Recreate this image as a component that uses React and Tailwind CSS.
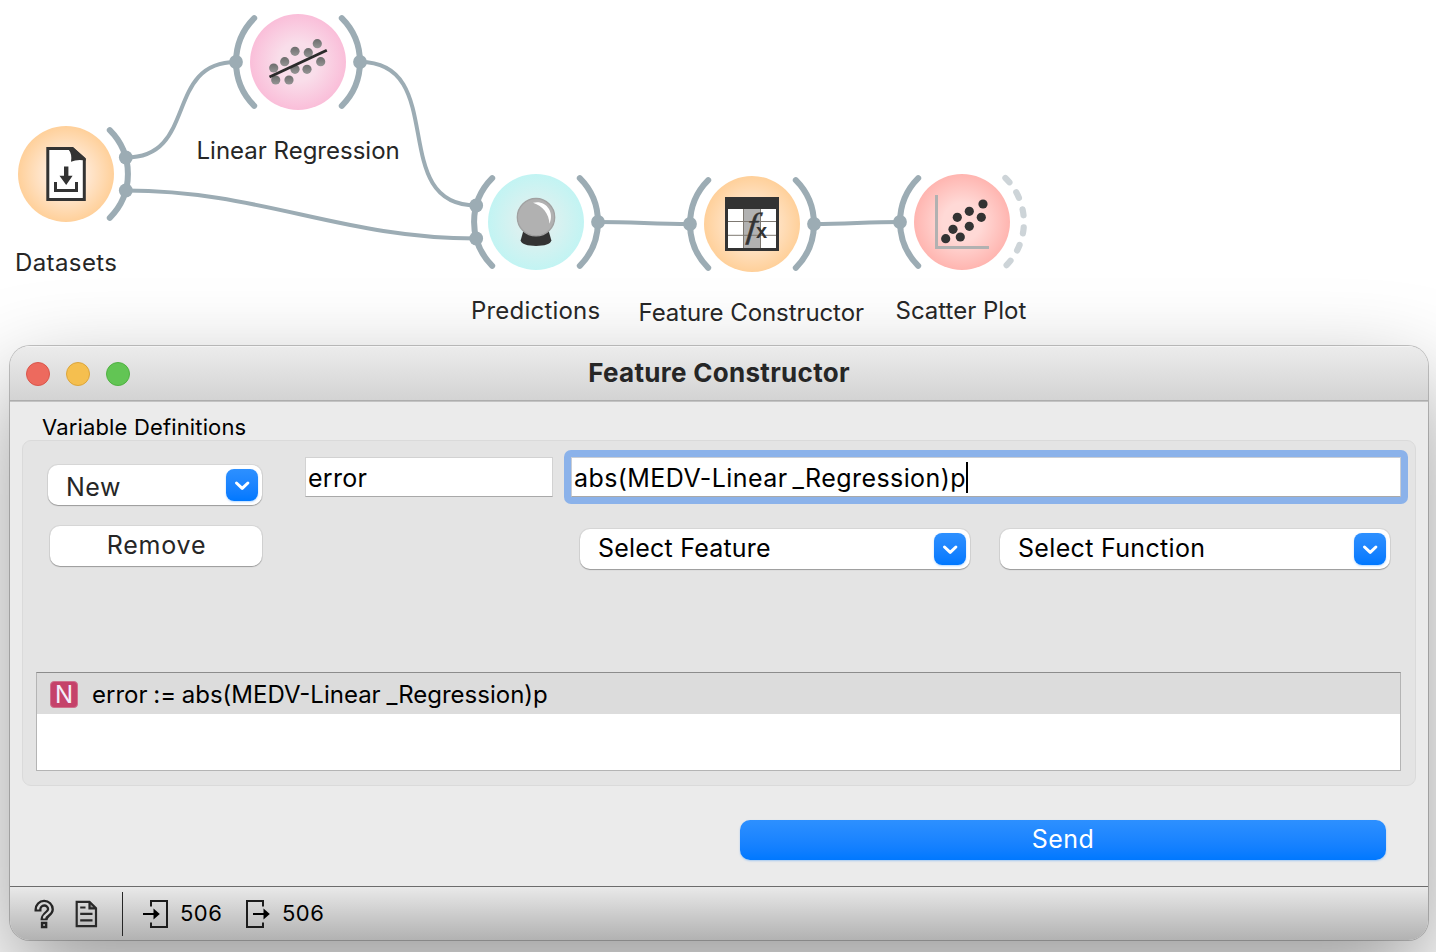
import React from "react";

const ARC = "#9cacb4";

function NodeArc({ cx, cy, side }) {
  const s = side === "right" ? 1 : -1;
  return (
    <path
      d={`M${cx + s * 43.8} ${cy - 43.8}A62 62 0 0 ${s === 1 ? 1 : 0} ${cx + s * 43.8} ${cy + 43.8}`}
      fill="none"
      stroke={ARC}
      strokeWidth="6"
      strokeLinecap="round"
    />
  );
}

function Disc({ id, cx, cy, inner, outer }) {
  return (
    <>
      <radialGradient id={id}>
        <stop offset="0" stopColor={inner} />
        <stop offset="0.4" stopColor={inner} />
        <stop offset="1" stopColor={outer} />
      </radialGradient>
      <circle cx={cx} cy={cy} r="48" fill={`url(#${id})`} />
    </>
  );
}

const links = [
  "M126 157.5C198 157.5 164 62 236 62",
  "M126 190.5C261 190.5 341 238.5 476 238.5",
  "M360 62C450 62 386 205.5 476 205.5",
  "M598 222C635 222 653 224 690 224",
  "M814 224C847 224 867 222 900 222",
];
const anchors = [
  [125.8, 157.5], [125.8, 190.5], [236, 62], [360, 62], [476.2, 205.5],
  [476.2, 238.5], [598, 222], [690, 224], [814, 224], [900, 222],
];
const regressionDots = [
  [273.7, 68], [284.7, 61.7], [295, 51.3], [308.3, 52.7], [317.3, 43.7],
  [320.7, 61.7], [307, 69.3], [295, 69.3], [275.7, 80], [289, 80],
];
const scatterDots = [
  [945.7, 238.7], [960.3, 237], [953, 229.3], [969.3, 226.3],
  [957.3, 217.3], [981.3, 217.3], [969.3, 211.3], [983, 204],
];

function Workflow() {
  return (
    <svg className="block h-[346px] w-[1436px] font-['Inter',sans-serif]" viewBox="0 0 1436 346">
      <defs>
        <linearGradient id="dot" x1="0" y1="0" x2="0" y2="1">
          <stop offset="0" stopColor="#6c6c6c" />
          <stop offset="1" stopColor="#959595" />
        </linearGradient>
      </defs>
      {links.map((d) => (
        <path key={d} d={d} fill="none" stroke={ARC} strokeWidth="4" />
      ))}
      <NodeArc cx={66} cy={174} side="right" />
      <NodeArc cx={298} cy={62} side="left" />
      <NodeArc cx={298} cy={62} side="right" />
      <NodeArc cx={536} cy={222} side="left" />
      <NodeArc cx={536} cy={222} side="right" />
      <NodeArc cx={752} cy={224} side="left" />
      <NodeArc cx={752} cy={224} side="right" />
      <NodeArc cx={962} cy={222} side="left" />
      <path
        d="M1005.4 178A62 62 0 0 1 1005.4 266.4"
        fill="none"
        stroke="#cdd4d8"
        strokeWidth="6.2"
        strokeLinecap="round"
        strokeDasharray="6 12.1"
      />
      {anchors.map(([x, y]) => (
        <circle key={`${x}-${y}`} cx={x} cy={y} r="6.9" fill={ARC} />
      ))}

      <Disc id="orange" cx={66} cy={174} inner="#ffe9d5" outer="#ffd09a" />
      <path d="M47.8 148.5H72l12.3 11V199.5H47.8z" fill="#fff" stroke="#333" strokeWidth="3" />
      <path d="M68.5 149.5Q72.3 154 71 161.7Q77 159 85.7 160.5V158.2L73 147H68.5z" fill="#333" />
      <path d="M64 166.5h4.4v9.2h4.2L66.2 185 59.500 175.700H64z" fill="#333" />
      <path d="M55.500 182v8.500h21V182" fill="none" stroke="#333" strokeWidth="3" />

      <Disc id="pink" cx={298} cy={62} inner="#f9deea" outer="#fabed9" />
      {regressionDots.map(([x, y]) => (
        <circle key={`${x}-${y}`} cx={x} cy={y} r="4.6" fill="url(#dot)" />
      ))}
      <path d="M269.500 77L326.800 50.300" stroke="#2b2b2b" strokeWidth="2.900" />

      <Disc id="cyan" cx={536} cy={222} inner="#dbf1f0" outer="#c2f4f3" />
      <path d="M523.300 231L520.700 240.300C520.700 244 528 246 536 246S551.300 244 551.300 240.300L548.700 231z" fill="#333" />
      <circle cx="536" cy="217.200" r="18.700" fill="#b1b1b1" stroke="#a1a1a1" strokeWidth="1.300" />
      <path d="M533 202.700C545 199.500 555 211 549.500 223.700C549 214 543 206 533 202.700z" fill="#fff" />

      <Disc id="amber" cx={752} cy={224} inner="#ffe6cd" outer="#ffd09a" />
      <path d="M725 197h54v54h-54z" fill="#333" />
      <path d="M728 209h48v39h-48z" fill="#fff" />
      <path d="M743.500 209h17v39h-17z" fill="#b1b1b1" />
      <path d="M728 221.500h48M728 235.300h48M743.500 209v39M760.500 209v39" stroke="#7d7871" strokeWidth="1" />
      <text x="746" y="237.300" fill="#333" stroke="#333" strokeWidth="0.500" fontSize="35" fontStyle="italic" fontFamily="Liberation Serif, serif" transform="translate(746 237.300) skewX(-7) translate(-746 -237.300)">f</text>
      <text x="756" y="238" fill="#333" fontSize="20" fontWeight="700" fontFamily="Liberation Sans, sans-serif">x</text>

      <Disc id="red" cx={962} cy={222} inner="#ffd9d6" outer="#ffb5b0" />
      <path d="M936.500 195v52.500H989" fill="none" stroke="#b1b1b1" strokeWidth="3" />
      {scatterDots.map(([x, y]) => (
        <circle key={`${x}-${y}`} cx={x} cy={y} r="4.600" fill="#333" />
      ))}

      <g fill="#262626" fontSize="24">
        <text x="15" y="271" className="tracking-[0.4px]">Datasets</text>
        <text x="196.500" y="159">Linear Regression</text>
        <text x="471" y="319" className="tracking-[0.2px]">Predictions</text>
        <text x="638.500" y="321" className="tracking-[-0.08px]">Feature Constructor</text>
        <text x="895.500" y="319">Scatter Plot</text>
      </g>
    </svg>
  );
}

function Chevron() {
  return (
    <span className="flex size-8 shrink-0 items-center justify-center rounded-[8px] bg-linear-to-b from-[#2d90ff] to-[#0078ff] shadow-[0_1px_2px_rgba(0,122,255,0.3)]">
      <svg className="size-8" viewBox="0 0 32 32" fill="none" stroke="#fff" strokeWidth="3" strokeLinecap="round" strokeLinejoin="round">
        <path d="M10.500 14L16.200 19.400L21.900 14" />
      </svg>
    </span>
  );
}

const control =
  "h-10 rounded-[10px] bg-white shadow-[0_0_0_1px_rgba(0,0,0,0.06),0_1px_1px_rgba(0,0,0,0.28)]";

function SelectBox({ label, className }) {
  return (
    <div className={`${control} flex w-[390px] items-start justify-between pt-1 pr-1 pl-[18px]`}>
      <span className={`-mt-1 leading-[38px] ${className}`}>{label}</span>
      <Chevron />
    </div>
  );
}

function TitleBar() {
  return (
    <div className="grid h-[56px] grid-cols-[1fr_auto_1fr] border-b border-[#c3c3c3] bg-linear-to-b from-[#ececec] to-[#d3d3d3] shadow-[inset_0_-1px_0_#adadad,inset_0_1px_0_#f4f4f4]">
      <div className="flex items-center gap-4 pl-4">
        <span className="size-6 rounded-full border border-[#d9564b] bg-[#ed6a5e]" />
        <span className="size-6 rounded-full border border-[#dba53c] bg-[#f5bf4f]" />
        <span className="size-6 rounded-full border border-[#50b142] bg-[#62c554]" />
      </div>
      <h1 className="text-[26px] leading-[53px] font-bold tracking-[0.3px] text-[#262626]">Feature Constructor</h1>
    </div>
  );
}

function Definitions() {
  return (
    <section className="flex h-[346px] flex-col rounded-[9px] border border-[#dadada] bg-[#e4e4e4] text-[25px] text-black">
      <div className="flex items-start pl-[25px]">
        <div className="flex w-[214px] flex-col gap-[21px] pt-6 text-[#262626]">
          <div className={`${control} flex items-start justify-between pt-1 pr-1 pl-[18px]`}>
            <span className="-mt-1 leading-[44px] tracking-[0.5px]">New</span>
            <Chevron />
          </div>
          <button className={`${control} ml-[2px] text-center leading-[38px] tracking-[0.8px]`}>
            <span className="block h-10 pl-px">Remove</span>
          </button>
        </div>
        <div className="mt-4 ml-[43px] h-10 w-[248px] border border-[#d2d2d2] border-b-[#a9a9a9] bg-white pl-[2px] leading-[40px] tracking-[0.28px]">
          error
        </div>
        <div className="ml-[11px] w-[844px] pt-[9px]">
          <div className="h-[54px] rounded-[7px] bg-[#8bb2ea] p-[7px]">
            <div className="flex h-10 items-start border border-[#c9cdd4] border-b-[#a9a9a9] bg-white pl-[2px]">
              <span className="leading-[40px] tracking-[0.42px] [word-spacing:-2.5px] whitespace-nowrap">abs(MEDV-Linear _Regression)p</span>
              <span className="mt-1 h-[31px] w-[2px] bg-black" />
            </div>
          </div>
          <div className="flex gap-[30px] pt-[25px] pl-4">
            <SelectBox label="Select Feature" className="tracking-[0.21px]" />
            <SelectBox label="Select Function" className="tracking-[0.32px]" />
          </div>
        </div>
      </div>
      <div className="mt-auto mb-[14px] ml-[13px] h-[99px] w-[1365px] border border-[#b4b4b4] border-t-[#8c8c8c] bg-white">
        <div className="flex h-[41px] items-start bg-[#dcdcdc] pl-[13px]">
          <span className="mt-[8px] h-[27px] w-[28px] rounded-[4px] border border-[#d0708c] bg-[#c5426a] text-center text-[24px] leading-[25px] font-normal text-[#f4eefb]">N</span>
          <span className="ml-[14px] text-[24px] leading-[44px] [word-spacing:-1px]">error := abs(MEDV-Linear _Regression)p</span>
        </div>
      </div>
    </section>
  );
}

function StatusBar() {
  return (
    <footer className="flex h-[54px] items-start border-t border-[#6c6c6c] bg-linear-to-b from-[#e9e9e9] to-[#b2b2b2] pl-[23px] text-[22px] leading-[53px] tracking-[0.5px] text-black">
      <svg className="mt-[11px] h-8 w-[22px]" viewBox="33 898 22 32" fill="none">
        <path d="M38 911.500V909.500A6.200 6.200 0 0 1 50.400 909.300C50.400 914 44 914 44 920.300" stroke="#262626" strokeWidth="7" />
        <path d="M38 909.500A6.200 6.200 0 0 1 50.400 909.300C50.400 914 44 914 44 918.400" stroke="#d5d5d5" strokeWidth="2.300" />
        <path d="M42 923h4.200v4H42z" stroke="#262626" strokeWidth="2.300" />
      </svg>
      <svg className="mt-[11px] ml-[19px] h-8 w-[24px]" viewBox="74 898 24 32" fill="none" stroke="#2a2a2a" strokeWidth="2.200">
        <path d="M76.700 901.800H89.500L96 908.300V926.200H76.700zM89.500 901.800V908.300H96M80.200 907.500H85.500M80.200 913.800H92.500M80.200 920.300H92.500" />
        <path d="M89.500 902L96 908.300H89.500z" fill="#262626" stroke="none" opacity="0.400" />
      </svg>
      <span className="mt-[5px] ml-[24px] h-[44px] w-px bg-[#262626]" />
      <svg className="mt-[11px] ml-[19px] h-8 w-[28px]" viewBox="142 898 28 32" fill="none" stroke="#1c1c1c" strokeWidth="2">
        <path d="M151 906.500V901H167V927H151V922.500" />
        <path d="M143 914H155" stroke="#000" />
        <path d="M153.500 908.500L159.800 914L153.500 919.500z" fill="#000" stroke="none" />
      </svg>
      <span className="ml-[10px] w-[42px]">506</span>
      <svg className="mt-[11px] ml-[23px] h-8 w-[28px]" viewBox="245 898 28 32" fill="none" stroke="#1c1c1c" strokeWidth="2">
        <path d="M263 906.500V901H247V927H263V922.500" />
        <path d="M253 914H265" stroke="#000" />
        <path d="M263.500 908.500L269.800 914L263.500 919.500z" fill="#000" stroke="none" />
      </svg>
      <span className="ml-[9px]">506</span>
    </footer>
  );
}

export default function App() {
  return (
    <div className="h-[952px] w-[1436px] overflow-hidden bg-white font-['Inter',sans-serif]">
      <Workflow />
      <main className="ml-[10px] flex h-[594px] w-[1418px] flex-col overflow-hidden rounded-[20px] bg-[#ebebeb] shadow-[0_0_0_1px_rgba(0,0,0,0.22),0_38px_96px_rgba(0,0,0,0.4)]">
        <TitleBar />
        <div className="flex flex-1 flex-col px-3 pt-3">
          <h2 className="pl-5 text-[22px] leading-[26px] tracking-[0.15px] text-black">Variable Definitions</h2>
          <Definitions />
          <button className="mt-[34px] mr-[30px] h-10 w-[646px] self-end rounded-[10px] bg-linear-to-b from-[#2d90ff] to-[#0078ff] text-[25px] tracking-[0.4px] text-white shadow-[0_1px_2px_rgba(0,122,255,0.3)]">
            <span className="block h-10 leading-[38px]">Send</span>
          </button>
        </div>
        <StatusBar />
      </main>
    </div>
  );
}
